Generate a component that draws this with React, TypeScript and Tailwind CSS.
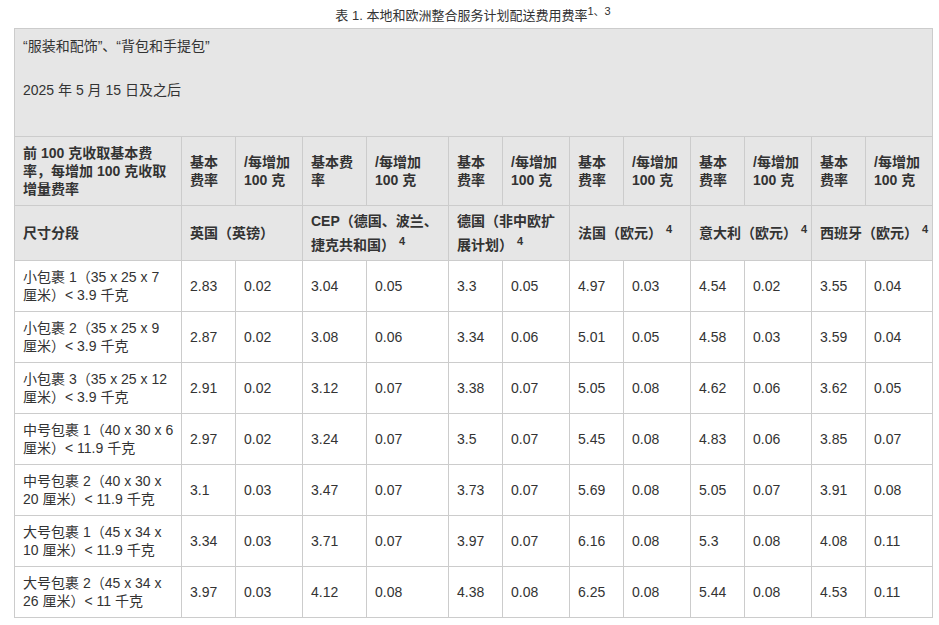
const widths = [167, 54, 67, 64, 82, 54, 67, 54, 67, 54, 67, 54, 67];

const rows: [string, string[]][] = [
  ["小包裹 1（35 x 25 x 7 厘米）< 3.9 千克", ["2.83", "0.02", "3.04", "0.05", "3.3", "0.05", "4.97", "0.03", "4.54", "0.02", "3.55", "0.04"]],
  ["小包裹 2（35 x 25 x 9 厘米）< 3.9 千克", ["2.87", "0.02", "3.08", "0.06", "3.34", "0.06", "5.01", "0.05", "4.58", "0.03", "3.59", "0.04"]],
  ["小包裹 3（35 x 25 x 12 厘米）< 3.9 千克", ["2.91", "0.02", "3.12", "0.07", "3.38", "0.07", "5.05", "0.08", "4.62", "0.06", "3.62", "0.05"]],
  ["中号包裹 1（40 x 30 x 6 厘米）< 11.9 千克", ["2.97", "0.02", "3.24", "0.07", "3.5", "0.07", "5.45", "0.08", "4.83", "0.06", "3.85", "0.07"]],
  ["中号包裹 2（40 x 30 x 20 厘米）< 11.9 千克", ["3.1", "0.03", "3.47", "0.07", "3.73", "0.07", "5.69", "0.08", "5.05", "0.07", "3.91", "0.08"]],
  ["大号包裹 1（45 x 34 x 10 厘米）< 11.9 千克", ["3.34", "0.03", "3.71", "0.07", "3.97", "0.07", "6.16", "0.08", "5.3", "0.08", "4.08", "0.11"]],
  ["大号包裹 2（45 x 34 x 26 厘米）< 11 千克", ["3.97", "0.03", "4.12", "0.08", "4.38", "0.08", "6.25", "0.08", "5.44", "0.08", "4.53", "0.11"]],
];

const headA = ["基本费率", "/每增加 100 克", "基本费率", "/每增加 100 克", "基本费率", "/每增加 100 克", "基本费率", "/每增加 100 克", "基本费率", "/每增加 100 克", "基本费率", "/每增加 100 克"];

const regions: [string, boolean, boolean][] = [
  ["英国（英镑）", false, true],
  ["CEP（德国、波兰、捷克共和国）", true, false],
  ["德国（非中欧扩展计划）", true, false],
  ["法国（欧元）", true, true],
  ["意大利（欧元）", true, true],
  ["西班牙（欧元）", true, true],
];

const cell = "border border-[#cccccc] px-2 align-middle";

export default function App() {
  return (
    <div className="bg-white text-[#333333] text-[14px] leading-[18px] overflow-hidden h-[625px]" style={{ fontFamily: '"Liberation Sans", Arial, "Noto Sans CJK SC", sans-serif' }}>
      <div className="pt-[7px] pl-[14px]">
        <div className="w-[918px] text-center text-[13px] leading-[17px] mb-[4px]">
          表 1. 本地和欧洲整合服务计划配送费用费率<sup className="text-[11px]">1、3</sup>
        </div>
        <table className="border-collapse table-fixed w-[918px]">
          <colgroup>
            {widths.map((w, i) => (
              <col key={i} style={{ width: w }} />
            ))}
          </colgroup>
          <tbody>
            <tr className="bg-[#e6e6e6] h-[108px]">
              <td colSpan={13} className={`${cell} align-top pt-[8px]`}>
                <p>“服装和配饰”、“背包和手提包”</p>
                <p className="mt-[26px]">2025 年 5 月 15 日及之后</p>
              </td>
            </tr>
            <tr className="bg-[#e6e6e6] h-[69px] font-bold">
              <td className={cell}>前 100 克收取基本费率，每增加 100 克收取增量费率</td>
              {headA.map((h, i) => (
                <td key={i} className={cell}>{h}</td>
              ))}
            </tr>
            <tr className="bg-[#e6e6e6] h-[55px] font-bold">
              <td className={cell}>尺寸分段</td>
              {regions.map(([r, s, nw], i) => (
                <td key={i} colSpan={2} className={`${cell} leading-[24px] ${nw ? "whitespace-nowrap" : ""}`}>
                  {r}
                  {s && <sup className="ml-[4px] text-[11px] leading-none">4</sup>}
                </td>
              ))}
            </tr>
            {rows.map(([label, vals], i) => (
              <tr key={i} className="h-[51px]">
                <td className="border border-[#cccccc] pl-2 pr-[5px] align-middle">{label}</td>
                {vals.map((v, j) => (
                  <td key={j} className={cell}>{v}</td>
                ))}
              </tr>
            ))}
          </tbody>
        </table>
      </div>
    </div>
  );
}
